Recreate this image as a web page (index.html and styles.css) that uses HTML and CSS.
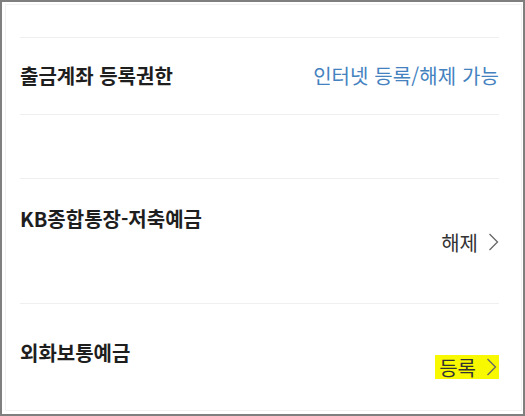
FILE: index.html
```html
<!DOCTYPE html>
<html lang="ko">
<head>
<meta charset="utf-8">
<title>출금계좌</title>
<link rel="stylesheet" href="styles.css">
</head>
<body>
<div class="frame">
  <div class="inner">
    <div class="top-gap"></div>
    <div class="info-row">
      <span class="title">출금계좌 등록권한</span>
      <span class="info-value">인터넷 등록/해제 가능</span>
    </div>
    <div class="gap"></div>
    <div class="acct acct-kb">
      <span class="title">KB종합통장-저축예금</span>
      <span class="action">해제
        <svg class="chev" width="11" height="18" viewBox="0 0 11 18"><polyline points="1.5,1 9.5,9 1.5,17" fill="none" stroke="#666" stroke-width="1.3"/></svg>
      </span>
    </div>
    <div class="acct acct-fx">
      <span class="title">외화보통예금</span>
      <span class="action hl">등록
        <svg class="chev" width="11" height="18" viewBox="0 0 11 18"><polyline points="1.5,1 9.5,9 1.5,17" fill="none" stroke="#666" stroke-width="1.3"/></svg>
      </span>
    </div>
  </div>
</div>
</body>
</html>
```
FILE: styles.css
```css
html, body {
  margin: 0;
  padding: 0;
  background: #fff;
}
body {
  font-family: "Noto Sans CJK KR", "Noto Sans", sans-serif;
  color: #222;
}
.frame {
  width: 525px;
  height: 416px;
  box-sizing: border-box;
  border: 2px solid #7f7f7f;
  padding: 2px 1px 3px 3px;
}
.inner {
  height: 100%;
  box-sizing: border-box;
  border: 1px solid #f1f1f1;
  padding: 0 22px 0 14px;
  display: flex;
  flex-direction: column;
}
.top-gap {
  height: 32px;
  flex: none;
}
.info-row {
  flex: none;
  height: 76px;
  border-top: 1px solid #efefef;
  border-bottom: 1px solid #efefef;
  display: flex;
  align-items: center;
  justify-content: space-between;
}
.title {
  font-size: 20px;
  font-weight: 700;
  line-height: 28px;
  color: #1e1e1e;
}
.info-value {
  font-size: 20px;
  font-weight: 400;
  letter-spacing: 0.1px;
  line-height: 28px;
  color: #4482bf;
}
.gap {
  flex: none;
  height: 63px;
}
.acct {
  flex: none;
  border-top: 1px solid #efefef;
  display: flex;
  align-items: flex-start;
  justify-content: space-between;
}
.acct-kb {
  height: 124px;
}
.acct-kb .title {
  margin-top: 26px;
}
.acct-kb .action {
  margin-top: 49px;
}
.acct-fx {
  flex: 1;
}
.acct-fx .title {
  margin-top: 35px;
}
.acct-fx .action {
  margin-top: 51px;
}
.action {
  display: flex;
  align-items: center;
  gap: 10px;
  height: 28px;
  font-size: 20px;
  font-weight: 400;
  color: #333;
}
.action.hl {
  height: 24px;
  background: #f8f800;
  padding: 0 2px 0 4px;
}
.chev {
  display: block;
}
```
